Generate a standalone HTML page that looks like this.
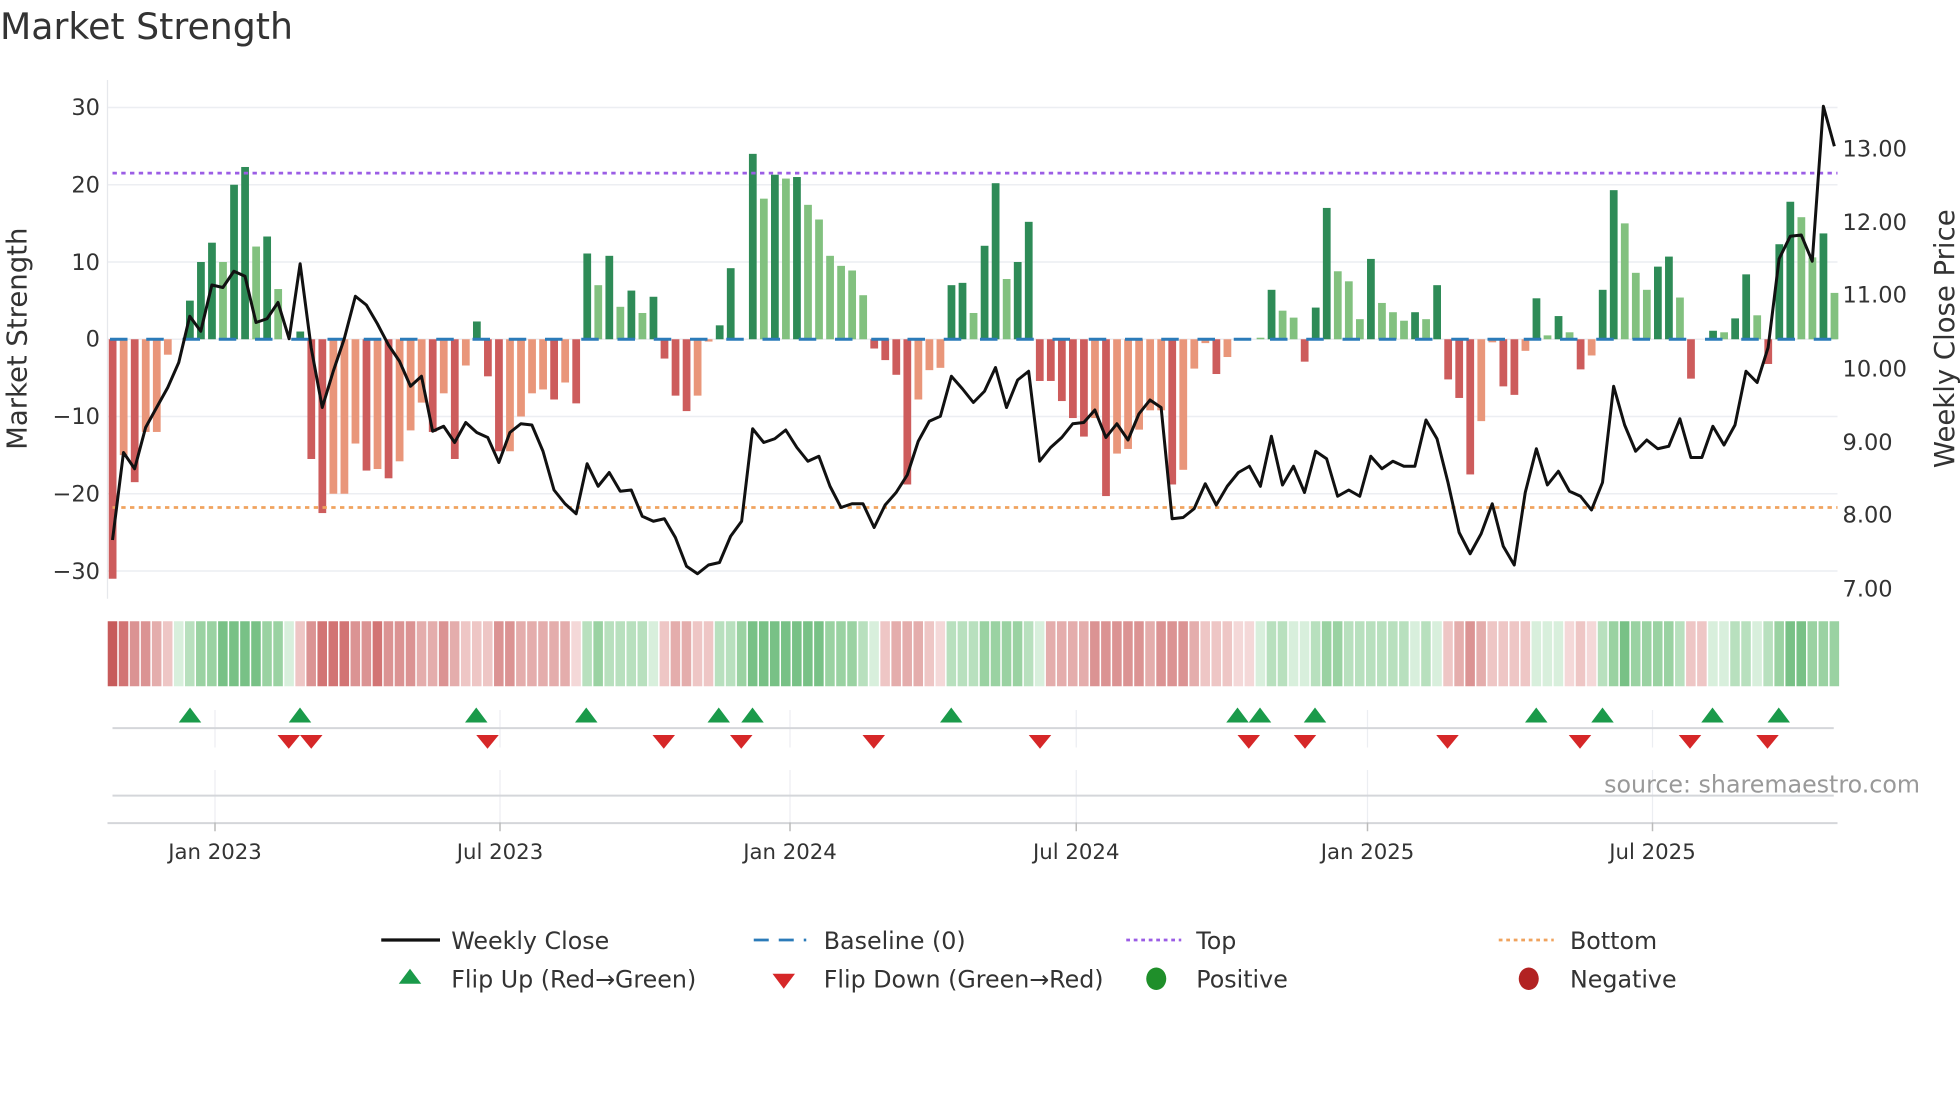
<!DOCTYPE html>
<html><head><meta charset="utf-8">
<style>
html,body{margin:0;padding:0;background:#fff;width:1960px;height:1102px;overflow:hidden}
svg{display:block}
text{font-family:"DejaVu Sans","Liberation Sans",sans-serif;fill:#333}
</style></head>
<body>
<svg id="s" width="1960" height="1102" viewBox="0 0 1568 881.6" xmlns="http://www.w3.org/2000/svg">
<rect width="1568" height="882" fill="#fff"/>
<text x="0" y="31" font-size="29" fill="#333">Market Strength</text>
<g stroke="#eceef2" stroke-width="1.2">
<line x1="86" x2="1470" y1="86" y2="86"/><line x1="86" x2="1470" y1="147.8" y2="147.8"/>
<line x1="86" x2="1470" y1="209.6" y2="209.6"/><line x1="86" x2="1470" y1="271.4" y2="271.4"/>
<line x1="86" x2="1470" y1="333.2" y2="333.2"/><line x1="86" x2="1470" y1="395" y2="395"/>
<line x1="86" x2="1470" y1="456.8" y2="456.8"/>
</g>
<line x1="86" x2="86" y1="64" y2="479" stroke="#e6e8ec" stroke-width="1"/>
<g font-size="18" text-anchor="end">
<text x="80" y="92">30</text><text x="80" y="154">20</text><text x="80" y="216">10</text>
<text x="80" y="277">0</text><text x="80" y="339">−10</text><text x="80" y="401">−20</text>
<text x="80" y="463">−30</text></g>
<g font-size="18">
<text x="1474" y="125">13.00</text><text x="1474" y="184">12.00</text><text x="1474" y="242">11.00</text>
<text x="1474" y="301">10.00</text><text x="1474" y="360">9.00</text><text x="1474" y="418">8.00</text>
<text x="1474" y="477">7.00</text></g>
<text transform="translate(21,271) rotate(-90)" font-size="22" text-anchor="middle">Market Strength</text>
<text transform="translate(1563,271) rotate(-90)" font-size="22" text-anchor="middle">Weekly Close Price</text>
<g id="bars"></g>
<line x1="88" x2="1470" y1="271.4" y2="271.4" stroke="#2b7bb9" stroke-width="2.4" stroke-dasharray="14 15"/>
<line x1="90" x2="1470" y1="138.5" y2="138.5" stroke="#9b5de5" stroke-width="2.2" stroke-dasharray="3.5 3.5"/>
<line x1="90" x2="1470" y1="406" y2="406" stroke="#f0a35e" stroke-width="2.2" stroke-dasharray="3.5 3.5"/>
<polyline id="price" fill="none" stroke="#111" stroke-width="2.4" stroke-linejoin="round"/>
<g id="strip"></g>
<g stroke="#eceef2" stroke-width="1">
<line x1="172" x2="172" y1="568" y2="598"/><line x1="400" x2="400" y1="568" y2="598"/>
<line x1="632" x2="632" y1="568" y2="598"/><line x1="861" x2="861" y1="568" y2="598"/>
<line x1="1094" x2="1094" y1="568" y2="598"/><line x1="1322" x2="1322" y1="568" y2="598"/>
<line x1="172" x2="172" y1="616" y2="658"/><line x1="400" x2="400" y1="616" y2="658"/>
<line x1="632" x2="632" y1="616" y2="658"/><line x1="861" x2="861" y1="616" y2="658"/>
<line x1="1094" x2="1094" y1="616" y2="658"/><line x1="1322" x2="1322" y1="616" y2="658"/>
</g>
<line x1="90" x2="1467" y1="582.5" y2="582.5" stroke="#d4d6da" stroke-width="1.6"/>
<line x1="90" x2="1467" y1="636.5" y2="636.5" stroke="#d4d6da" stroke-width="1.6"/>
<line x1="86" x2="1470" y1="658.5" y2="658.5" stroke="#d4d6da" stroke-width="1.6"/>
<g stroke="#bbb" stroke-width="1.2">
<line x1="172" x2="172" y1="658" y2="665"/><line x1="400" x2="400" y1="658" y2="665"/>
<line x1="632" x2="632" y1="658" y2="665"/><line x1="861" x2="861" y1="658" y2="665"/>
<line x1="1094" x2="1094" y1="658" y2="665"/><line x1="1322" x2="1322" y1="658" y2="665"/>
</g>
<g id="flips"></g>
<text x="1536" y="634" font-size="19" text-anchor="end" style="fill:#999">source: sharemaestro.com</text>
<g font-size="17" text-anchor="middle">
<text x="172" y="687">Jan 2023</text><text x="400" y="687">Jul 2023</text><text x="632" y="687">Jan 2024</text>
<text x="861" y="687">Jul 2024</text><text x="1094" y="687">Jan 2025</text><text x="1322" y="687">Jul 2025</text></g>
<g font-size="19">
<line x1="305" x2="352" y1="752" y2="752" stroke="#111" stroke-width="2.6"/>
<text x="361" y="759">Weekly Close</text>
<line x1="603" x2="645" y1="752" y2="752" stroke="#2b7bb9" stroke-width="2.2" stroke-dasharray="12 8"/>
<text x="659" y="759">Baseline (0)</text>
<line x1="901" x2="945" y1="752" y2="752" stroke="#9b5de5" stroke-width="2.2" stroke-dasharray="3 3"/>
<text x="957" y="759">Top</text>
<line x1="1199" x2="1243" y1="752" y2="752" stroke="#f0a35e" stroke-width="2.2" stroke-dasharray="3 3"/>
<text x="1256" y="759">Bottom</text>
<polygon points="328,775 337,787 319,787" fill="#1a9a4a"/>
<text x="361" y="790">Flip Up (Red→Green)</text>
<polygon points="618,779 636,779 627,791" fill="#d62728"/>
<text x="659" y="790">Flip Down (Green→Red)</text>
<ellipse cx="925" cy="783" rx="8" ry="9" fill="#1f8f2a"/>
<text x="957" y="790">Positive</text>
<ellipse cx="1223" cy="783" rx="8" ry="9" fill="#b22222"/>
<text x="1256" y="790">Negative</text>
</g>
</svg>
<script>
var V=[-31,-15,-18.5,-12,-12,-2,0,5,10,12.5,10,20,22.3,12,13.3,6.5,0,1,-15.5,-22.5,-20,-20,-13.5,-17,-16.8,-18,-15.8,-11.8,-8.2,-12,-7,-15.5,-3.4,2.3,-4.8,-14.5,-14.5,-10,-7,-6.5,-7.8,-5.6,-8.3,11.1,7,10.8,4.2,6.3,3.4,5.5,-2.5,-7.3,-9.3,-7.3,-0.3,1.8,9.2,0,24,18.2,21.3,20.8,21,17.4,15.5,10.8,9.5,8.9,5.7,-1.2,-2.7,-4.6,-18.8,-7.8,-4,-3.7,7,7.3,3.4,12.1,20.2,7.8,10,15.2,
-5.4,-5.4,-8,-10.2,-12.6,-10.2,-20.3,-14.8,-14.2,-11.7,-9.2,-9.2,-18.8,-16.9,-3.8,-0.5,-4.5,-2.3,0,0,0.2,6.4,3.7,2.8,-2.9,4.1,17,8.8,7.5,2.6,10.4,4.7,3.5,2.4,3.5,2.6,7,-5.2,-7.6,-17.5,-10.6,-0.4,-6.1,-7.2,-1.5,5.3,0.5,3,0.9,-3.9,-2.1,6.4,19.3,15,8.6,6.4,9.4,10.7,5.4,-5.1,0,1.1,0.9,2.7,8.4,3.1,-3.2,12.3,17.8,15.8,10.6,13.7,6];
var darkIdx={0:1,2:1,7:1,8:1,9:1,11:1,12:1,14:1,17:1,18:1,19:1,23:1,25:1,29:1,31:1,33:1,34:1,35:1,40:1,42:1,43:1,45:1,47:1,49:1,50:1,51:1,52:1,55:1,56:1,58:1,60:1,62:1,69:1,70:1,71:1,72:1,76:1,77:1,79:1,80:1,82:1,83:1,84:1,85:1,86:1,87:1,88:1,90:1,96:1,100:1,105:1,108:1,109:1,110:1,114:1,118:1,120:1,121:1,122:1,123:1,126:1,127:1,129:1,131:1,133:1,135:1,136:1,140:1,141:1,143:1,145:1,147:1,148:1,150:1,151:1,152:1,155:1};
var NS="http://www.w3.org/2000/svg";
function el(t,a,p){var e=document.createElementNS(NS,t);for(var k in a)e.setAttribute(k,a[k]);p.appendChild(e);return e;}
var bars=document.getElementById('bars'),strip=document.getElementById('strip');
var sp=8.83,x0=90,y0=271.4,k=6.18;
for(var i=0;i<V.length;i++){
 var v=V[i],x=x0+i*sp,d=darkIdx[i];
 if(v!==0){var h=Math.abs(v)*k;
  var c=v>0?(d?'#2e8b57':'#82c17f'):(d?'#cd5c5c':'#e9967a');
  el('rect',{x:x-3,y:v>0?y0-h:y0,width:6.2,height:h,fill:c},bars);}
 var s=(V[i]+(V[i-1]||V[i])+(V[i+1]||V[i]))/3;
 var col;
 if(s<-17)col='#d27474';else if(s<-11)col='#db9393';else if(s<-6)col='#e4adac';else if(s<-1)col='#eec6c5';else if(s<=0.3)col='#f4d8d8';
 else if(s<3)col='#d8efdc';else if(s<8)col='#b8e0be';else if(s<14)col='#9ad2a2';else col='#78c186';
 if(i==0)col='#c75b5b';
 el('rect',{x:x-sp/2+0.6,y:497,width:sp-1.2,height:52,fill:col},strip);
}
var P=[432,362,375,342,326,310,290,253,265,228,230,217,221,258,255,242,271,211,278,326,297,271,237,244,259,276,289,309,301,345,341,354,338,346,350,370,346,339,340,361,392,403,411,371,389,378,393,392,413,417,415,430,453,459,452,450,429,417,343,354,351,344,358,369,365,389,406,403,403,422,404,394,380,353,337,333,301,311,322,313,294,326,304,297,
369,358,350,339,338,328,350,339,352,331,320,326,415,414,407,387,404,389,378,373,389,349,388,373,394,361,367,397,392,397,365,375,369,373,373,336,351,386,426,443,427,403,437,452,394,359,388,377,393,397,408,386,309,340,361,352,359,357,335,366,366,341,356,340,297,306,278,207,189,188,209,85,117];
var pts=[];for(var i=0;i<P.length;i++)pts.push((x0+i*sp).toFixed(1)+','+P[i]);
document.getElementById('price').setAttribute('points',pts.join(' '));
var f=document.getElementById('flips');
[152,240,381,469,575,602,761,990,1008,1052,1229,1282,1370,1423].forEach(function(x){el('polygon',{points:(x)+',566 '+(x+9)+',578 '+(x-9)+',578',fill:'#1a9a4a'},f);});
[231,249,390,531,593,699,832,999,1044,1158,1264,1352,1414].forEach(function(x){el('polygon',{points:(x-9)+',588 '+(x+9)+',588 '+x+',599',fill:'#d62728'},f);});
</script>
</body></html>
